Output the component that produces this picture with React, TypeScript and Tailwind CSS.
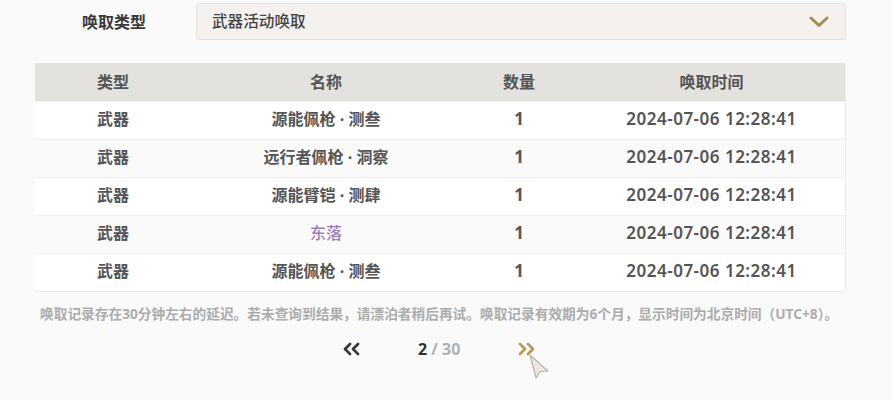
import React from 'react';

const rows = [
  { type: '武器', name: '源能佩枪 · 测叁', count: 1, time: '2024-07-06 12:28:41' },
  { type: '武器', name: '远行者佩枪 · 洞察', count: 1, time: '2024-07-06 12:28:41' },
  { type: '武器', name: '源能臂铠 · 测肆', count: 1, time: '2024-07-06 12:28:41' },
  { type: '武器', name: '东落', count: 1, time: '2024-07-06 12:28:41', rare: true },
  { type: '武器', name: '源能佩枪 · 测叁', count: 1, time: '2024-07-06 12:28:41' },
];

const font = "font-['Noto_Sans','Noto_Sans_CJK_SC',sans-serif]";

const ChevronDown = () => (
  <svg width="20" height="12" viewBox="0 0 20 12" fill="none">
    <path d="M2 2 L10 9.5 L18 2" stroke="#a48d4e" strokeWidth="3" strokeLinecap="round" strokeLinejoin="round" />
  </svg>
);

const DoubleChevron = ({ dir, color }: { dir: 'left' | 'right'; color: string }) => (
  <svg width="18" height="14" viewBox="0 0 18 14" fill="none">
    <g transform={dir === 'left' ? 'translate(18 0) scale(-1 1)' : undefined} stroke={color} strokeWidth="2.8" strokeLinecap="round" strokeLinejoin="round">
      <path d="M2 2 L7 7 L2 12" />
      <path d="M10 2 L15 7 L10 12" />
    </g>
  </svg>
);

const Cursor = () => (
  <svg width="22" height="26" viewBox="0 0 22 26">
    <path d="M2 2 L20 18 L12 18.5 L8 25 Z" fill="#ece8e0" stroke="#b9b3a8" strokeWidth="1.2" strokeLinejoin="round" />
  </svg>
);

const cols = 'grid grid-cols-[156px_270px_116px_269px] items-center';

export default function App() {
  return (
    <div className={`${font} w-[892px] h-[400px] bg-[#fafafa] relative overflow-hidden`}>
      <div className="flex items-center pt-[3px]">
        <div className="w-[196px] pl-[82px] text-[16px] font-bold text-[#3a3a3a]">唤取类型</div>
        <div className="w-[650px] h-[37px] flex items-center justify-between pl-[15px] pr-[16px] bg-[#f4f1ee] border border-[#e6e2dd] rounded-[3px]">
          <span className="text-[15.6px] font-medium text-[#444]">武器活动唤取</span>
          <ChevronDown />
        </div>
      </div>

      <div className="ml-[35px] mt-[23px] w-[811px] border-r border-b border-[#ececec]">
        <div className={`${cols} h-[38px] bg-[#e3e2df] text-[16px] font-bold text-[#555]`}>
          <div className="text-center">类型</div>
          <div className="text-center">名称</div>
          <div className="text-center">数量</div>
          <div className="text-center">唤取时间</div>
        </div>
        {rows.map((r, i) => (
          <div
            key={i}
            className={`${cols} h-[38px] pb-[3px] text-[16px] leading-[20px] font-bold text-[#555] border-t border-[#efefef] ${i % 2 === 0 ? 'bg-white' : 'bg-[#fafafa]'}`}
          >
            <div className="text-center">{r.type}</div>
            <div className={`text-center ${r.rare ? 'text-[#9a7cb7] font-medium' : ''}`}>{r.name}</div>
            <div className="text-center text-[17px]">{r.count}</div>
            <div className="text-center text-[17px] font-semibold tracking-[0.5px]">{r.time}</div>
          </div>
        ))}
      </div>

      <p className="ml-[40px] mt-[12px] text-[13.7px] font-bold text-[#acacac] whitespace-nowrap">
        唤取记录存在30分钟左右的延迟。若未查询到结果，请漂泊者稍后再试。唤取记录有效期为6个月，显示时间为北京时间（UTC+8）。
      </p>

      <div className="flex items-center mt-[12px] pl-[342px]">
        <DoubleChevron dir="left" color="#3a3a3a" />
        <div className="ml-[58px] text-[16px] font-bold">
          <span className="text-[#333]">2</span>
          <span className="text-[#b0b0b0]"> / 30</span>
        </div>
        <div className="ml-[58px]">
          <DoubleChevron dir="right" color="#b89c5a" />
        </div>
      </div>

      <div className="absolute left-[528px] top-[353px]">
        <Cursor />
      </div>
    </div>
  );
}
